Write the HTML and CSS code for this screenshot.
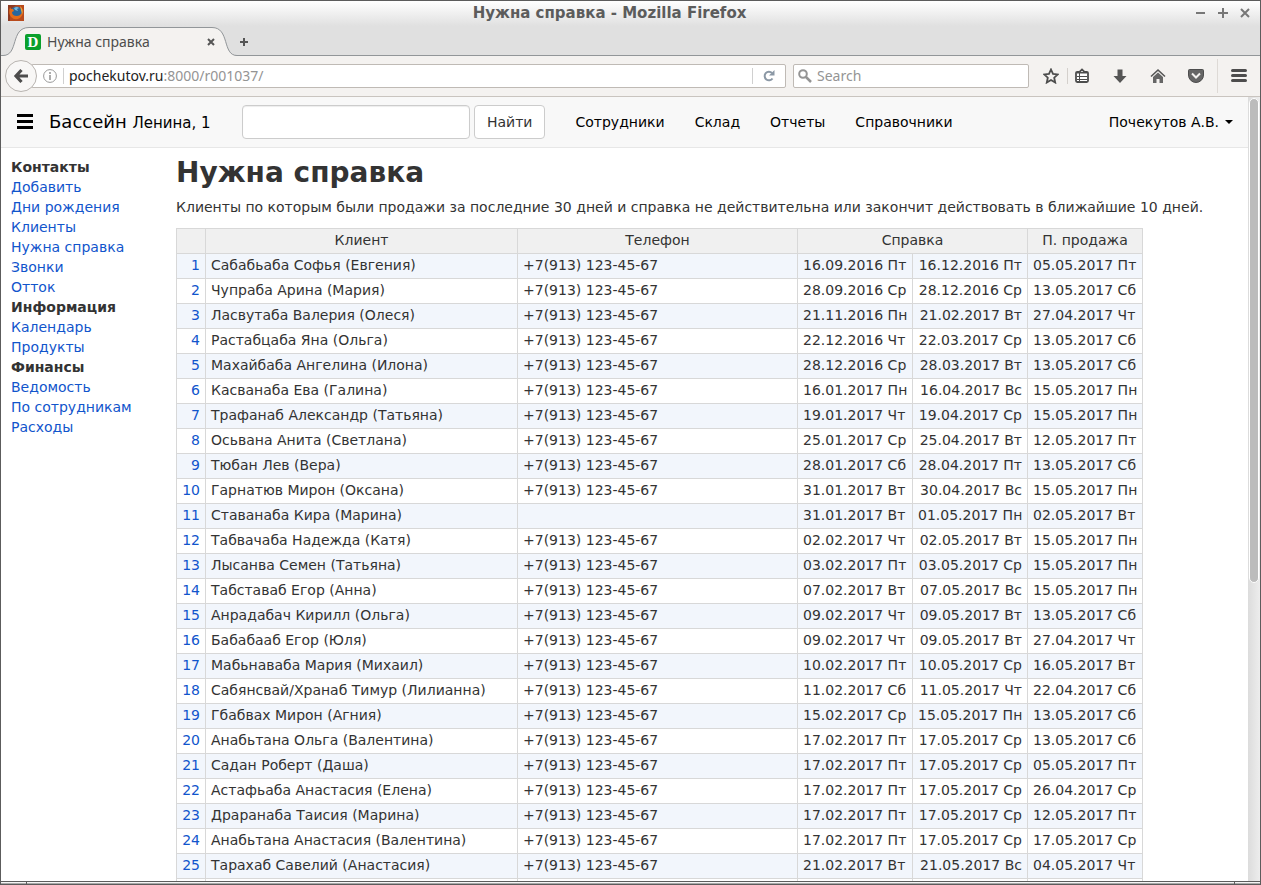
FILE: index.html
```
<!DOCTYPE html>
<html lang="ru">
<head>
<meta charset="utf-8">
<title>Нужна справка</title>
<link rel="stylesheet" href="styles.css">
</head>
<body>
<div class="window">
  <header class="titlebar">
    <svg class="app-icon" viewBox="0 0 16 16" aria-hidden="true"><rect width="16" height="16" fill="#b84a1c"/><path d="M0 0h8L2 5v11H0z" fill="#8d3a22"/><circle cx="8.500" cy="7.500" r="6" fill="#28679c"/><path d="M6 3q3-2 5 0l-2 1 1 2-3-1z" fill="#76b6d8"/><path d="M2 2q-2 6 1 10 4 4 9 1 4-3 3-9-1 7-6 7-5 0-5-4l2-1-1-2-2 0z" fill="#e46c18"/><path d="M12 1q4 3 2 8l-1-4z" fill="#efa33a"/></svg>
    <span class="window-title">Нужна справка - Mozilla Firefox</span>
    <div class="window-buttons">
      <button aria-label="Свернуть"><svg viewBox="0 0 12 12"><path d="M1 6h9"/></svg></button>
      <button aria-label="Развернуть"><svg viewBox="0 0 12 12"><path d="M1 6h10M6 1v10"/></svg></button>
      <button aria-label="Закрыть"><svg viewBox="0 0 12 12"><path d="M2 2l8 8M10 2l-8 8"/></svg></button>
    </div>
  </header>

  <div class="tabbar">
    <div class="tab">
      <svg class="tab-shape" viewBox="0 0 238 30" aria-hidden="true"><path d="M0 29.500H2C18 29.500 9 1.500 28 1.500H211C229 1.500 221 29.500 236 29.500H238V30H0Z" fill="#f4f2f0"/><path d="M0 29.500H2C18 29.500 9 1.500 28 1.500H211C229 1.500 221 29.500 236 29.500H238" fill="none" stroke="#929699"/></svg>
      <span class="favicon">D</span>
      <span class="tab-title">Нужна справка</span>
      <button class="tab-close" aria-label="Закрыть вкладку"><svg viewBox="0 0 8 8"><path d="M1 1l6 6M7 1l-6 6"/></svg></button>
    </div>
    <button class="tab-new" aria-label="Новая вкладка"><svg viewBox="0 0 8 8"><path d="M0 4h8M4 0v8"/></svg></button>
  </div>

  <div class="toolbar">
    <button class="back" aria-label="Назад"><svg viewBox="0 0 16 16"><path d="M8.500 2L3 8l5.500 6M3 8h12" fill="none" stroke="#4d4d4d" stroke-width="3.200"/></svg></button>
    <div class="urlbar">
      <svg class="info" viewBox="0 0 14 14"><circle cx="7" cy="7" r="6.400" fill="none" stroke="#999"/><path d="M7 3v2M7 6v5" stroke="#999" stroke-width="1.600"/></svg>
      <span class="url"><b>pochekutov.ru</b>:8000/r001037/</span>
      <button class="reload" aria-label="Обновить"><svg viewBox="0 0 12 12"><path d="M9.500 8.500A4.300 4.300 0 1 1 9 3" fill="none" stroke="#8b98a5" stroke-width="2"/><path d="M11.500 0v5.500H6z" fill="#8b98a5"/></svg></button>
    </div>
    <label class="search">
      <svg viewBox="0 0 14 14"><circle cx="5" cy="5" r="3.800" fill="none" stroke="#949494" stroke-width="2"/><path d="M8 8l5 5" stroke="#949494" stroke-width="2.500"/></svg>
      <input type="text" placeholder="Search" aria-label="Search">
    </label>
    <div class="tools">
      <button class="star" aria-label="Закладка"><svg viewBox="0 0 16 16"><path d="M8 1.500l2 4.400 4.700.5-3.500 3.300 1 4.800L8 12l-4.200 2.500 1-4.800L1.300 6.400 6 5.900z" fill="none" stroke="#4d4d4d" stroke-width="1.800"/></svg></button>
      <button aria-label="Все закладки"><svg viewBox="0 0 16 16"><path d="M2 5q0-1.200 1.200-1.200H5.500L8 1.500l2.500 2.300h2.300Q14 3.800 14 5v7.800q0 1.200-1.200 1.200H3.200Q2 14 2 12.800z" fill="#fff" stroke="#4d4d4d" stroke-width="1.800"/><path d="M3 4h10v1.500H3z" fill="#4d4d4d"/><path d="M3 8.500h10M3 11.500h10M5.500 5v9" stroke="#4d4d4d" fill="none"/></svg></button>
      <button aria-label="Загрузки"><svg viewBox="0 0 16 16"><path d="M5.500 1.500h5V8H14.500L8 15 1.500 8h4z" fill="#555"/></svg></button>
      <button aria-label="Домой"><svg viewBox="0 0 16 16"><path d="M1 8.500L8 2l7 6.500" fill="none" stroke="#555" stroke-width="1.600"/><path d="M8 4.500l5 4.500v6H9.500v-4h-3v4H3V9z" fill="#666"/></svg></button>
      <button aria-label="Pocket"><svg viewBox="0 0 16 16"><path d="M.5 2.500q0-1 1-1h13q1 0 1 1V7a7.500 7.500 0 0 1-15 0z" fill="#666" stroke="#4d4d4d"/><path d="M4 5.500l4 4 4-4" fill="none" stroke="#f4f2f0" stroke-width="2"/></svg></button>
    </div>
    <button class="menu" aria-label="Меню"><svg viewBox="0 0 16 16"><path d="M1.500 2.500h13M1.500 7.500h13M1.500 12.500h13" stroke="#4d4d4d" stroke-width="3" stroke-linecap="round"/></svg></button>
  </div>

  <div class="viewport">
    <div class="page">
      <nav class="navbar">
        <button class="burger" aria-label="Меню раздела"><svg viewBox="0 0 16 16"><path d="M0 1.500h16M0 7.500h16M0 13.500h16" stroke="#000" stroke-width="3"/></svg></button>
        <a class="brand" href="#">Бассейн <small>Ленина, 1</small></a>
        <form class="find"><input type="text" aria-label="Поиск клиента"><button type="button">Найти</button></form>
        <div class="links"><a href="#">Сотрудники</a><a href="#">Склад</a><a href="#">Отчеты</a><a href="#">Справочники</a></div>
        <a class="user" href="#">Почекутов А.В.<span class="caret"></span></a>
      </nav>
      <div class="columns">
        <aside class="sidebar">
          <strong>Контакты</strong>
          <a href="#">Добавить</a>
          <a href="#">Дни рождения</a>
          <a href="#">Клиенты</a>
          <a href="#">Нужна справка</a>
          <a href="#">Звонки</a>
          <a href="#">Отток</a>
          <strong>Информация</strong>
          <a href="#">Календарь</a>
          <a href="#">Продукты</a>
          <strong>Финансы</strong>
          <a href="#">Ведомость</a>
          <a href="#">По сотрудникам</a>
          <a href="#">Расходы</a>
        </aside>
        <main>
          <h1>Нужна справка</h1>
          <p>Клиенты по которым были продажи за последние 30 дней и справка не действительна или закончит действовать в ближайшие 10 дней.</p>
          <table>
            <colgroup><col class="c-num"><col class="c-name"><col class="c-phone"><col class="c-date"><col class="c-date"><col class="c-date"></colgroup>
            <thead><tr><th></th><th>Клиент</th><th>Телефон</th><th colspan="2">Справка</th><th>П. продажа</th></tr></thead>
            <tbody>
            <tr><td><a href="#">1</a></td><td>Сабабьаба Софья (Евгения)</td><td>+7(913) 123-45-67</td><td>16.09.2016 Пт</td><td>16.12.2016 Пт</td><td>05.05.2017 Пт</td></tr>
            <tr><td><a href="#">2</a></td><td>Чупраба Арина (Мария)</td><td>+7(913) 123-45-67</td><td>28.09.2016 Ср</td><td>28.12.2016 Ср</td><td>13.05.2017 Сб</td></tr>
            <tr><td><a href="#">3</a></td><td>Ласвутаба Валерия (Олеся)</td><td>+7(913) 123-45-67</td><td>21.11.2016 Пн</td><td>21.02.2017 Вт</td><td>27.04.2017 Чт</td></tr>
            <tr><td><a href="#">4</a></td><td>Растабцаба Яна (Ольга)</td><td>+7(913) 123-45-67</td><td>22.12.2016 Чт</td><td>22.03.2017 Ср</td><td>13.05.2017 Сб</td></tr>
            <tr><td><a href="#">5</a></td><td>Махайбаба Ангелина (Илона)</td><td>+7(913) 123-45-67</td><td>28.12.2016 Ср</td><td>28.03.2017 Вт</td><td>13.05.2017 Сб</td></tr>
            <tr><td><a href="#">6</a></td><td>Касванаба Ева (Галина)</td><td>+7(913) 123-45-67</td><td>16.01.2017 Пн</td><td>16.04.2017 Вс</td><td>15.05.2017 Пн</td></tr>
            <tr><td><a href="#">7</a></td><td>Трафанаб Александр (Татьяна)</td><td>+7(913) 123-45-67</td><td>19.01.2017 Чт</td><td>19.04.2017 Ср</td><td>15.05.2017 Пн</td></tr>
            <tr><td><a href="#">8</a></td><td>Осьвана Анита (Светлана)</td><td>+7(913) 123-45-67</td><td>25.01.2017 Ср</td><td>25.04.2017 Вт</td><td>12.05.2017 Пт</td></tr>
            <tr><td><a href="#">9</a></td><td>Тюбан Лев (Вера)</td><td>+7(913) 123-45-67</td><td>28.01.2017 Сб</td><td>28.04.2017 Пт</td><td>13.05.2017 Сб</td></tr>
            <tr><td><a href="#">10</a></td><td>Гарнатюв Мирон (Оксана)</td><td>+7(913) 123-45-67</td><td>31.01.2017 Вт</td><td>30.04.2017 Вс</td><td>15.05.2017 Пн</td></tr>
            <tr><td><a href="#">11</a></td><td>Ставанаба Кира (Марина)</td><td></td><td>31.01.2017 Вт</td><td>01.05.2017 Пн</td><td>02.05.2017 Вт</td></tr>
            <tr><td><a href="#">12</a></td><td>Табвачаба Надежда (Катя)</td><td>+7(913) 123-45-67</td><td>02.02.2017 Чт</td><td>02.05.2017 Вт</td><td>15.05.2017 Пн</td></tr>
            <tr><td><a href="#">13</a></td><td>Лысанва Семен (Татьяна)</td><td>+7(913) 123-45-67</td><td>03.02.2017 Пт</td><td>03.05.2017 Ср</td><td>15.05.2017 Пн</td></tr>
            <tr><td><a href="#">14</a></td><td>Табставаб Егор (Анна)</td><td>+7(913) 123-45-67</td><td>07.02.2017 Вт</td><td>07.05.2017 Вс</td><td>15.05.2017 Пн</td></tr>
            <tr><td><a href="#">15</a></td><td>Анрадабач Кирилл (Ольга)</td><td>+7(913) 123-45-67</td><td>09.02.2017 Чт</td><td>09.05.2017 Вт</td><td>13.05.2017 Сб</td></tr>
            <tr><td><a href="#">16</a></td><td>Бабабааб Егор (Юля)</td><td>+7(913) 123-45-67</td><td>09.02.2017 Чт</td><td>09.05.2017 Вт</td><td>27.04.2017 Чт</td></tr>
            <tr><td><a href="#">17</a></td><td>Мабьнаваба Мария (Михаил)</td><td>+7(913) 123-45-67</td><td>10.02.2017 Пт</td><td>10.05.2017 Ср</td><td>16.05.2017 Вт</td></tr>
            <tr><td><a href="#">18</a></td><td>Сабянсвай/Хранаб Тимур (Лилианна)</td><td>+7(913) 123-45-67</td><td>11.02.2017 Сб</td><td>11.05.2017 Чт</td><td>22.04.2017 Сб</td></tr>
            <tr><td><a href="#">19</a></td><td>Гбабвах Мирон (Агния)</td><td>+7(913) 123-45-67</td><td>15.02.2017 Ср</td><td>15.05.2017 Пн</td><td>13.05.2017 Сб</td></tr>
            <tr><td><a href="#">20</a></td><td>Анабьтана Ольга (Валентина)</td><td>+7(913) 123-45-67</td><td>17.02.2017 Пт</td><td>17.05.2017 Ср</td><td>13.05.2017 Сб</td></tr>
            <tr><td><a href="#">21</a></td><td>Садан Роберт (Даша)</td><td>+7(913) 123-45-67</td><td>17.02.2017 Пт</td><td>17.05.2017 Ср</td><td>05.05.2017 Пт</td></tr>
            <tr><td><a href="#">22</a></td><td>Астафьаба Анастасия (Елена)</td><td>+7(913) 123-45-67</td><td>17.02.2017 Пт</td><td>17.05.2017 Ср</td><td>26.04.2017 Ср</td></tr>
            <tr><td><a href="#">23</a></td><td>Драранаба Таисия (Марина)</td><td>+7(913) 123-45-67</td><td>17.02.2017 Пт</td><td>17.05.2017 Ср</td><td>12.05.2017 Пт</td></tr>
            <tr><td><a href="#">24</a></td><td>Анабьтана Анастасия (Валентина)</td><td>+7(913) 123-45-67</td><td>17.02.2017 Пт</td><td>17.05.2017 Ср</td><td>17.05.2017 Ср</td></tr>
            <tr><td><a href="#">25</a></td><td>Тарахаб Савелий (Анастасия)</td><td>+7(913) 123-45-67</td><td>21.02.2017 Вт</td><td>21.05.2017 Вс</td><td>04.05.2017 Чт</td></tr>
            <tr><td></td><td></td><td></td><td></td><td></td><td></td></tr>
            </tbody>
          </table>
        </main>
      </div>
    </div>
    <div class="scrollbar"><div class="thumb"></div></div>
  </div>
  <footer class="frame"></footer>
</div>
</body>
</html>
```
FILE: styles.css
```
* { box-sizing: border-box; }
body { margin: 0; font: 14px/20px "DejaVu Sans", sans-serif; color: #333; background: #fff; }
button { padding: 0; border: 0; background: none; font: inherit; color: inherit; }
svg { display: block; }
a { color: #1155cc; text-decoration: none; }

.window { display: flex; flex-direction: column; height: 100vh; border: 1px solid #5c5c5c; overflow: hidden; }

.titlebar { display: flex; align-items: center; height: 25px; flex: none; padding: 0 9px 2px 7px; background: linear-gradient(#fff, #e0e0e0); }
.app-icon { width: 16px; height: 16px; }
.window-title { flex: 1; text-align: center; font-size: 15px; font-weight: bold; color: #5c5c5c; }
.window-buttons { display: flex; gap: 10px; }
.window-buttons svg { width: 12px; height: 12px; fill: none; stroke: #777; stroke-width: 2; }

.tabbar { display: flex; height: 30px; flex: none; background: linear-gradient(#929699, #929699) bottom / 100% 1px no-repeat #e0e0e0; font-family: "Noto Sans", sans-serif; }
.tab { position: relative; display: flex; align-items: center; width: 238px; padding: 2px 24px 0 24px; }
.tab-shape { position: absolute; left: 0; top: 0; width: 238px; height: 30px; }
.favicon { position: relative; width: 16px; height: 16px; border-radius: 2px; background: #0aa02c; color: #fff; font: bold 15px/16px "Liberation Serif", serif; text-align: center; }
.tab-title { position: relative; flex: 1; padding-left: 6px; color: #4d4d4d; }
.tab-close { position: relative; }
.tab-close svg, .tab-new svg { width: 8px; height: 8px; stroke: #555; stroke-width: 2; }
.tab-new { padding: 2px 0 0 1px; }

.toolbar { display: flex; align-items: center; height: 41px; flex: none; padding: 0 13px 0 4px; background: #f4f2f0; border-bottom: 1px solid #c9c4bf; font-family: "Noto Sans", sans-serif; }
.back { position: relative; z-index: 1; display: grid; place-items: center; flex: none; width: 32px; height: 32px; border: 1px solid #b8b4b0; border-radius: 50%; background: #f8f7f6; }
.back svg { width: 16px; height: 16px; }
.urlbar { display: flex; align-items: center; flex: 1; height: 24px; margin-left: -6px; padding-left: 11px; border: 1px solid #bfbab5; border-radius: 2px; background: #fff; }
.info { flex: none; width: 14px; height: 14px; }
.url { flex: 1; margin-left: 6px; padding-left: 5px; line-height: 16px; border-left: 1px solid #d0d0d0; color: #949494; }
.url b { font-weight: normal; color: #222; }
.reload { display: grid; place-items: center; width: 33px; height: 16px; border-left: 1px solid #d0d0d0; }
.reload svg { width: 12px; height: 12px; }
.search { display: flex; align-items: center; gap: 5px; width: 236px; height: 24px; margin-left: 7px; padding-left: 4px; border: 1px solid #bfbab5; border-radius: 2px; background: #fff; }
.search svg { width: 14px; height: 14px; flex: none; }
.search input { flex: 1; min-width: 0; padding: 0; border: 0; font: inherit; background: none; }
.search input::placeholder { color: #949494; }
.tools { display: flex; gap: 22px; margin-left: 1px; padding: 0 13px; }
.tools svg, .menu svg { width: 16px; height: 16px; }
.star { width: 25px; margin-right: -16px; border-right: 1px solid #d4d0cc; }
.menu { display: grid; place-items: center end; width: 30px; height: 34px; border-left: 1px solid #dedad6; }

.viewport { display: flex; flex: 1; min-height: 0; }
.page { flex: 1; min-width: 0; overflow: hidden; }
.scrollbar { width: 12px; padding: 1px; background: linear-gradient(90deg, #dcdcdc, #ededed); }
.thumb { height: 62%; border: 1px solid #fff; border-radius: 5px; background: #bcbcbc; }

.navbar { display: flex; align-items: center; height: 51px; padding: 0 15px 0 16px; background: #f8f8f8; border-bottom: 1px solid #e7e7e7; }
.navbar a { color: #000; }
.burger svg { width: 16px; height: 16px; }
.brand { width: 193px; margin-left: 16px; font-size: 18px; white-space: nowrap; }
.brand small { font-size: 15px; }
.find { display: flex; gap: 4px; }
.find input, .find button { height: 34px; border: 1px solid #ccc; border-radius: 4px; background: #fff; }
.find input { width: 228px; padding: 6px 12px; font: inherit; box-shadow: inset 0 1px 1px rgba(0, 0, 0, .075); }
.find button { padding: 0 12px; }
.links { display: flex; gap: 30px; margin-left: 30px; }
.user { display: flex; align-items: center; gap: 6px; margin-left: auto; }
.caret { border: 4px solid transparent; border-top-color: #000; border-bottom: 0; }

.columns { display: flex; }
.sidebar { display: flex; flex-direction: column; flex: none; width: 165px; padding: 9px 0 0 10px; }
main { flex: 1; min-width: 0; padding-left: 10px; }
h1 { margin: 5px 0 4px; font-size: 28px; line-height: 40px; }
p { margin: 0 0 11px; white-space: nowrap; }
table { width: 967px; table-layout: fixed; border-collapse: collapse; }
.c-num { width: 29px; }
.c-name { width: 312px; }
.c-phone { width: 280px; }
.c-date { width: 115px; }
th, td { height: 25px; padding: 1px 5px 3px; border: 1px solid #d8d8d8; white-space: nowrap; }
th { background: #f0f0f0; font-weight: normal; }
td:first-child, td:nth-child(5) { text-align: right; }
tbody tr:nth-child(odd) { background: #f2f6fc; }

.frame { display: flex; justify-content: space-between; height: 3px; flex: none; padding: 0 25px; border-top: 1px solid #5c5c5c; background: linear-gradient(#f4f4f4 50%, #a8a8a8 50%); }
.frame::before, .frame::after { content: ""; width: 1px; background: #5c5c5c; }
```
